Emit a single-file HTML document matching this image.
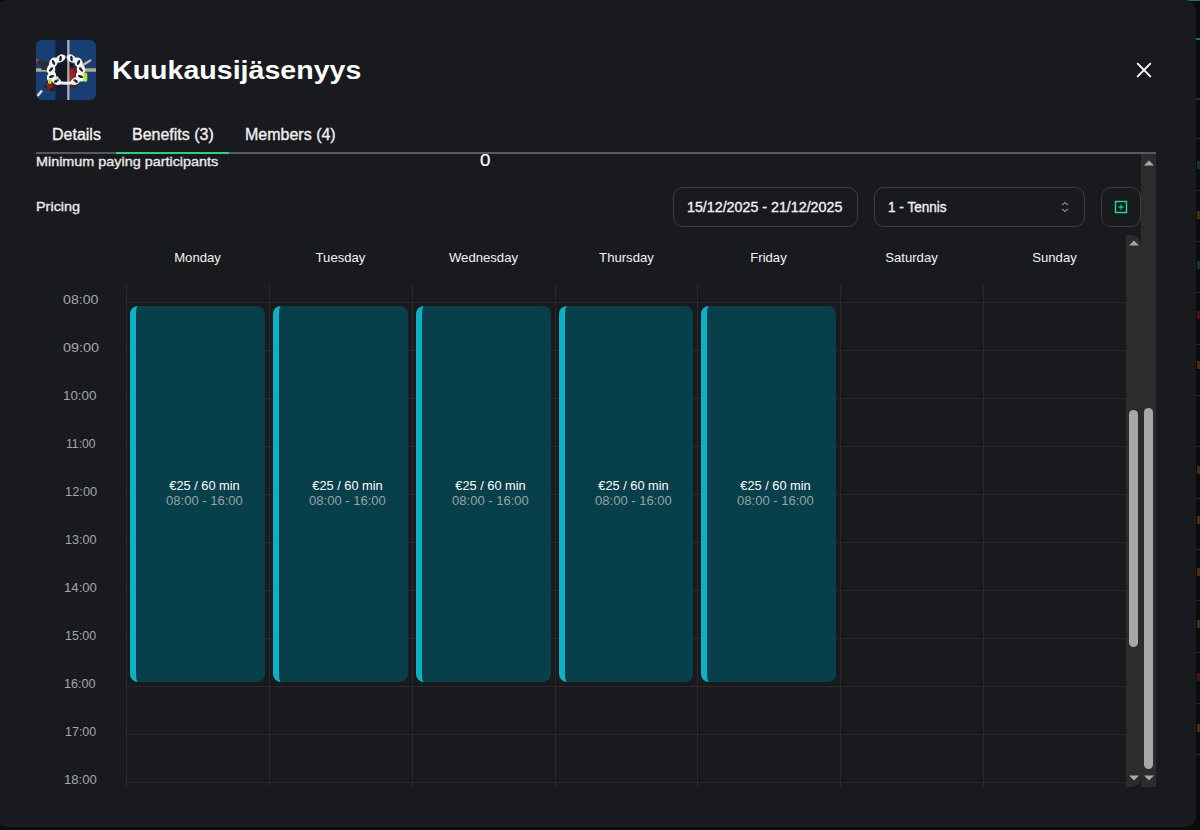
<!DOCTYPE html>
<html><head><meta charset="utf-8"><style>
*{box-sizing:border-box;margin:0;padding:0}
html,body{width:1200px;height:830px;overflow:hidden;background:#0b0c0e;font-family:"Liberation Sans",sans-serif;color:#fff}
#modal{position:absolute;left:-2.7px;top:-0.5px;width:1199px;height:827.3px;background:#191a1e;border-radius:10px}
.t{position:absolute;white-space:nowrap;line-height:1}
.m{-webkit-text-stroke:0.35px currentColor}
.vl{position:absolute;top:283px;height:504px;width:1px;background:#292929}
.hl{position:absolute;left:126px;width:1000px;height:1px;background:#292929}
.ev{position:absolute;top:306px;height:376px;width:135px;background:#07404a;border-radius:8px;border-left:6px solid #0cb2c3}
.day{position:absolute;top:250px;width:143px;text-align:center;font-size:13px;color:#f2f2f2;line-height:16px;transform:scaleX(1.01)}
.tm{position:absolute;font-size:12px;color:#a3a6ad;line-height:14px;white-space:nowrap;transform-origin:0 0}
.box{position:absolute;border:1px solid #3a3c42;border-radius:10px}
</style></head><body>
<div style="position:absolute;left:1187px;top:0;width:13px;height:1px;background:#1f7a45"></div><div style="position:absolute;left:1196px;top:38px;width:4px;height:2px;background:#1f7a45"></div><div style="position:absolute;left:1196px;top:98px;width:4px;height:2px;background:#2a2b2e"></div><div style="position:absolute;left:1196px;top:138px;width:4px;height:1px;background:#25262a"></div><div style="position:absolute;left:1196px;top:190px;width:4px;height:1px;background:#25262a"></div><div style="position:absolute;left:1196px;top:241px;width:4px;height:1px;background:#25262a"></div><div style="position:absolute;left:1196px;top:292px;width:4px;height:1px;background:#25262a"></div><div style="position:absolute;left:1196px;top:344px;width:4px;height:1px;background:#25262a"></div><div style="position:absolute;left:1196px;top:395px;width:4px;height:1px;background:#25262a"></div><div style="position:absolute;left:1196px;top:446px;width:4px;height:1px;background:#25262a"></div><div style="position:absolute;left:1196px;top:498px;width:4px;height:1px;background:#25262a"></div><div style="position:absolute;left:1196px;top:549px;width:4px;height:1px;background:#25262a"></div><div style="position:absolute;left:1196px;top:600px;width:4px;height:1px;background:#25262a"></div><div style="position:absolute;left:1196px;top:652px;width:4px;height:1px;background:#25262a"></div><div style="position:absolute;left:1196px;top:703px;width:4px;height:1px;background:#25262a"></div><div style="position:absolute;left:1196px;top:754px;width:4px;height:1px;background:#25262a"></div><div style="position:absolute;left:1197px;top:161px;width:3px;height:8px;background:#1d8a4f;opacity:.35"></div><div style="position:absolute;left:1197px;top:211px;width:3px;height:8px;background:#b86a1c;opacity:.35"></div><div style="position:absolute;left:1197px;top:261px;width:3px;height:8px;background:#1d8a4f;opacity:.35"></div><div style="position:absolute;left:1197px;top:311px;width:3px;height:8px;background:#b0262b;opacity:.35"></div><div style="position:absolute;left:1197px;top:361px;width:3px;height:8px;background:#b86a1c;opacity:.35"></div><div style="position:absolute;left:1197px;top:466px;width:3px;height:8px;background:#b86a1c;opacity:.35"></div><div style="position:absolute;left:1197px;top:516px;width:3px;height:8px;background:#b86a1c;opacity:.35"></div><div style="position:absolute;left:1197px;top:568px;width:3px;height:8px;background:#b86a1c;opacity:.35"></div><div style="position:absolute;left:1197px;top:620px;width:3px;height:8px;background:#b86a1c;opacity:.35"></div><div style="position:absolute;left:1197px;top:673px;width:3px;height:8px;background:#a0222a;opacity:.35"></div><div style="position:absolute;left:1197px;top:724px;width:3px;height:8px;background:#b86a1c;opacity:.35"></div>
<div id="modal"></div>
<svg style="position:absolute;left:36px;top:40px" width="60" height="60" viewBox="0 0 60 60">
<defs><clipPath id="av"><rect width="60" height="60" rx="6"/></clipPath></defs>
<g clip-path="url(#av)">
<rect width="60" height="60" fill="#173f75"/>

<rect x="19.5" y="0" width="12" height="60" fill="#142039"/><circle cx="30" cy="31" r="9.5" fill="#17141b"/>
<rect x="0" y="28.3" width="14" height="3.4" fill="#b3ad90"/>
<rect x="48" y="28.3" width="12" height="3.4" fill="#b3ad90"/>
<path d="M0 19 L12 22 L14 30 L6 30Z" fill="#2a2d33"/>
<rect x="0" y="19" width="2.5" height="2.5" fill="#b8452c"/>
<path d="M47 25 L55 20" stroke="#c4b894" stroke-width="2.5"/>
<path d="M1.5 56 L6 50.5" stroke="#d6d6d6" stroke-width="2.6"/>
<path d="M8 47 L14 37 L22 44 L17 52Z" fill="#3a1a1a"/>
<path d="M10 44 L14 40 L18 46 L12 50Z" fill="#8a1d1d"/>
<path d="M34 27 C40 25 44 32 42 40 L40 48 L33 47Z" fill="#6f1717"/>
<path d="M34 29 C38 28 40 33 39 38 L36 42 L33 40Z" fill="#9c1f22"/>
<rect x="31.2" y="0" width="2.3" height="60" fill="#a9adb4"/>
<rect x="20" y="36" width="2.5" height="2.5" rx="1" fill="#9ccc2a"/>
<ellipse cx="24.5" cy="18.5" rx="5.4" ry="3.6" transform="rotate(-30 24.5 18.5)" fill="#f3f3f3"/><ellipse cx="24.5" cy="18.5" rx="1.3" ry="2.7" transform="rotate(5 24.5 18.5)" fill="#1a1f26"/><ellipse cx="35.5" cy="18.5" rx="5.4" ry="3.6" transform="rotate(30 35.5 18.5)" fill="#f3f3f3"/><ellipse cx="35.5" cy="18.5" rx="1.3" ry="2.7" transform="rotate(-5 35.5 18.5)" fill="#1a1f26"/><ellipse cx="17.5" cy="22.5" rx="5.4" ry="4.0" transform="rotate(-60 17.5 22.5)" fill="#f3f3f3"/><ellipse cx="17.5" cy="22.5" rx="1.3" ry="2.7" transform="rotate(-25 17.5 22.5)" fill="#1a1f26"/><ellipse cx="42.5" cy="22.5" rx="5.4" ry="4.0" transform="rotate(60 42.5 22.5)" fill="#f3f3f3"/><ellipse cx="42.5" cy="22.5" rx="1.3" ry="2.7" transform="rotate(25 42.5 22.5)" fill="#1a1f26"/><ellipse cx="15" cy="29.5" rx="4.2" ry="5.4" transform="rotate(5 15 29.5)" fill="#f3f3f3"/><ellipse cx="15" cy="29.5" rx="1.3" ry="2.7" transform="rotate(40 15 29.5)" fill="#1a1f26"/><ellipse cx="45" cy="29.5" rx="4.2" ry="5.4" transform="rotate(-5 45 29.5)" fill="#f3f3f3"/><ellipse cx="45" cy="29.5" rx="1.3" ry="2.7" transform="rotate(-40 45 29.5)" fill="#1a1f26"/><ellipse cx="15.5" cy="36.5" rx="4.2" ry="5.4" transform="rotate(35 15.5 36.5)" fill="#f3f3f3"/><ellipse cx="15.5" cy="36.5" rx="1.3" ry="2.7" transform="rotate(70 15.5 36.5)" fill="#1a1f26"/><ellipse cx="44.5" cy="36.5" rx="4.2" ry="5.4" transform="rotate(-35 44.5 36.5)" fill="#f3f3f3"/><ellipse cx="44.5" cy="36.5" rx="1.3" ry="2.7" transform="rotate(-70 44.5 36.5)" fill="#1a1f26"/><ellipse cx="20.5" cy="41" rx="5.2" ry="3.6" transform="rotate(30 20.5 41)" fill="#f3f3f3"/><ellipse cx="20.5" cy="41" rx="1.3" ry="2.7" transform="rotate(65 20.5 41)" fill="#1a1f26"/><ellipse cx="39.5" cy="41" rx="5.2" ry="3.6" transform="rotate(-30 39.5 41)" fill="#f3f3f3"/><ellipse cx="39.5" cy="41" rx="1.3" ry="2.7" transform="rotate(-65 39.5 41)" fill="#1a1f26"/>
<path d="M21.5 40.5 Q30 43 38.5 40.5 L38.5 44 Q30 45.5 21.5 44Z" fill="#f3f3f3"/>
<rect x="12" y="39" width="3.5" height="5" rx="1.7" fill="#b6e02a"/>
<rect x="47.5" y="32.5" width="3.8" height="9.5" rx="1.9" fill="#b6e02a"/>

</g></svg>
<div class="t" style="left:112px;top:58px;font-size:25px;font-weight:bold;color:#fff;transform:scaleX(1.143);transform-origin:0 0">Kuukausijäsenyys</div>
<svg style="position:absolute;left:1135px;top:61px" width="18" height="18" viewBox="0 0 18 18"><path d="M2.7 2.7 L15.3 15.3 M15.3 2.7 L2.7 15.3" stroke="#fff" stroke-width="1.9" stroke-linecap="round"/></svg>
<div class="t m" style="left:52px;top:127px;font-size:16px;color:#f0f0f0">Details</div>
<div class="t m" style="left:132px;top:127px;font-size:16px;color:#f0f0f0">Benefits (3)</div>
<div class="t m" style="left:245px;top:127px;font-size:16px;color:#f0f0f0">Members (4)</div>
<div style="position:absolute;left:36px;top:152px;width:1120px;height:2px;background:#565a67"></div>
<div style="position:absolute;left:116px;top:152px;width:113px;height:2px;background:#22d97a"></div>
<div class="t m" style="left:36px;top:155px;font-size:13px;color:#e8e8e8;transform:scaleX(1.106);transform-origin:0 0">Minimum paying participants</div>
<div class="t" style="left:480px;top:152px;font-size:17px;color:#fff;-webkit-text-stroke:0.2px #fff;transform:scaleX(1.1);transform-origin:0 0">0</div>
<div class="t m" style="left:36px;top:200px;font-size:13px;color:#e8e8e8;transform:scaleX(1.11);transform-origin:0 0">Pricing</div>
<div class="box" style="left:673px;top:187px;width:185px;height:40px"></div>
<div class="t m" style="left:687px;top:200px;font-size:14px;color:#f0f0f0;transform:scaleX(1.018);transform-origin:0 0">15/12/2025 - 21/12/2025</div>
<div class="box" style="left:874px;top:187px;width:211px;height:40px"></div>
<div class="t m" style="left:888px;top:200px;font-size:14px;color:#f0f0f0;transform:scaleX(0.97);transform-origin:0 0">1 - Tennis</div>
<svg style="position:absolute;left:1060px;top:201px" width="10" height="12" viewBox="0 0 10 12"><path d="M2 4 L5 1.5 L8 4 M2 8 L5 10.5 L8 8" stroke="#808b91" stroke-width="1.1" fill="none"/></svg>
<div class="box" style="left:1101px;top:187px;width:40px;height:40px"></div>
<svg style="position:absolute;left:1114px;top:200px" width="14" height="14" viewBox="0 0 14 14"><rect x="1.5" y="1.5" width="11" height="11" fill="none" stroke="#22e07a" stroke-width="1.4"/><path d="M7 4.3 V9.7 M4.3 7 H9.7" stroke="#17a3ad" stroke-width="1.3"/><rect x="6.3" y="6.3" width="1.4" height="1.4" fill="#22d97a"/></svg>
<div class="day" style="left:126.00px">Monday</div>
<div class="day" style="left:268.86px">Tuesday</div>
<div class="day" style="left:411.71px">Wednesday</div>
<div class="day" style="left:554.57px">Thursday</div>
<div class="day" style="left:697.43px">Friday</div>
<div class="day" style="left:840.29px">Saturday</div>
<div class="day" style="left:983.14px">Sunday</div>
<div class="vl" style="left:126px"></div>
<div class="vl" style="left:269px"></div>
<div class="vl" style="left:412px"></div>
<div class="vl" style="left:555px"></div>
<div class="vl" style="left:697px"></div>
<div class="vl" style="left:840px"></div>
<div class="vl" style="left:983px"></div>
<div class="hl" style="top:302px"></div>
<div class="hl" style="top:350px"></div>
<div class="hl" style="top:398px"></div>
<div class="hl" style="top:446px"></div>
<div class="hl" style="top:494px"></div>
<div class="hl" style="top:542px"></div>
<div class="hl" style="top:590px"></div>
<div class="hl" style="top:638px"></div>
<div class="hl" style="top:686px"></div>
<div class="hl" style="top:734px"></div>
<div class="hl" style="top:782px"></div>
<div class="tm" style="top:293px;left:63.30px;transform:scaleX(1.180)">08:00</div>
<div class="tm" style="top:341px;left:63.00px;transform:scaleX(1.200)">09:00</div>
<div class="tm" style="top:389px;left:63.49px;transform:scaleX(1.114)">10:00</div>
<div class="tm" style="top:437px;left:65.59px;transform:scaleX(1.014)">11:00</div>
<div class="tm" style="top:485px;left:64.73px;transform:scaleX(1.072)">12:00</div>
<div class="tm" style="top:533px;left:64.75px;transform:scaleX(1.052)">13:00</div>
<div class="tm" style="top:581px;left:64.00px;transform:scaleX(1.097)">14:00</div>
<div class="tm" style="top:629px;left:64.76px;transform:scaleX(1.041)">15:00</div>
<div class="tm" style="top:677px;left:64.45px;transform:scaleX(1.052)">16:00</div>
<div class="tm" style="top:725px;left:64.76px;transform:scaleX(1.041)">17:00</div>
<div class="tm" style="top:773px;left:64.16px;transform:scaleX(1.095)">18:00</div>
<div class="ev" style="left:130.000px;width:134.857px"></div>
<div class="t" style="left:137px;width:135px;top:480px;text-align:center;font-size:12px;color:#fff;transform:scaleX(1.067)">€25 / 60 min</div>
<div class="t" style="left:137px;width:135px;top:495px;text-align:center;font-size:12px;color:#93a3a6;transform:scaleX(1.085)">08:00 - 16:00</div>
<div class="ev" style="left:272.857px;width:134.857px"></div>
<div class="t" style="left:280px;width:135px;top:480px;text-align:center;font-size:12px;color:#fff;transform:scaleX(1.067)">€25 / 60 min</div>
<div class="t" style="left:280px;width:135px;top:495px;text-align:center;font-size:12px;color:#93a3a6;transform:scaleX(1.085)">08:00 - 16:00</div>
<div class="ev" style="left:415.714px;width:134.857px"></div>
<div class="t" style="left:423px;width:135px;top:480px;text-align:center;font-size:12px;color:#fff;transform:scaleX(1.067)">€25 / 60 min</div>
<div class="t" style="left:423px;width:135px;top:495px;text-align:center;font-size:12px;color:#93a3a6;transform:scaleX(1.085)">08:00 - 16:00</div>
<div class="ev" style="left:558.571px;width:134.857px"></div>
<div class="t" style="left:566px;width:135px;top:480px;text-align:center;font-size:12px;color:#fff;transform:scaleX(1.067)">€25 / 60 min</div>
<div class="t" style="left:566px;width:135px;top:495px;text-align:center;font-size:12px;color:#93a3a6;transform:scaleX(1.085)">08:00 - 16:00</div>
<div class="ev" style="left:701.429px;width:134.857px"></div>
<div class="t" style="left:708px;width:135px;top:480px;text-align:center;font-size:12px;color:#fff;transform:scaleX(1.067)">€25 / 60 min</div>
<div class="t" style="left:708px;width:135px;top:495px;text-align:center;font-size:12px;color:#93a3a6;transform:scaleX(1.085)">08:00 - 16:00</div>
<div style="position:absolute;left:1126px;top:235px;width:15px;height:552px;background:#2c2c2c;border-radius:0 10px 10px 0"></div>
<div style="position:absolute;left:1141px;top:154px;width:15px;height:633px;background:#2c2c2c"></div>
<div style="position:absolute;left:1129px;top:410px;width:9px;height:237px;background:#a8a8a8;border-radius:5px"></div>
<div style="position:absolute;left:1144px;top:408px;width:9px;height:361px;background:#a8a8a8;border-radius:5px"></div>
<svg style="position:absolute;left:1128.5px;top:240px" width="10" height="6"><path d="M0 5.5 L5 0.5 L10 5.5Z" fill="#a8a8a8"/></svg>
<svg style="position:absolute;left:1143.5px;top:160px" width="10" height="6"><path d="M0 5.5 L5 0.5 L10 5.5Z" fill="#a8a8a8"/></svg>
<svg style="position:absolute;left:1128.5px;top:775px" width="10" height="6"><path d="M0 0.5 L5 5.5 L10 0.5Z" fill="#a8a8a8"/></svg>
<svg style="position:absolute;left:1143.5px;top:775px" width="10" height="6"><path d="M0 0.5 L5 5.5 L10 0.5Z" fill="#a8a8a8"/></svg>
</body></html>
